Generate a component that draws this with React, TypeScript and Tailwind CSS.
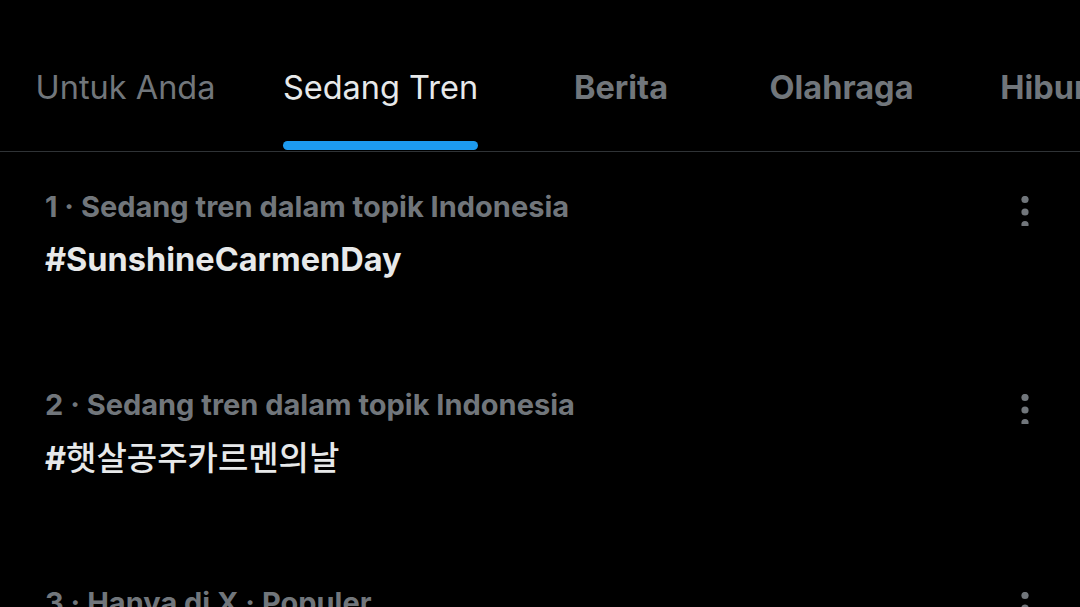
const tabs = [
  { label: 'Untuk Anda', width: 'w-[251px]', active: false, bold: false },
  { label: 'Sedang Tren', width: 'w-[259px]', active: true, bold: false },
  { label: 'Berita', width: 'w-[222px]', active: false, bold: true },
  { label: 'Olahraga', width: 'w-[219px]', active: false, bold: true },
  { label: 'Hiburan', width: 'w-[224px]', active: false, bold: true },
];

const trends = [
  { meta: '1 · Sedang tren dalam topik Indonesia', tag: '#SunshineCarmenDay', kr: false },
  { meta: '2 · Sedang tren dalam topik Indonesia', tag: '햇살공주카르멘의날', kr: true },
  { meta: '3 · Hanya di X · Populer', tag: '', kr: false },
];

function MoreIcon() {
  return (
    <svg width="30" height="30" viewBox="0 0 30 30" fill="#71767b">
      <circle cx="15" cy="3.5" r="3.6" />
      <circle cx="15" cy="16" r="3.6" />
      <circle cx="15" cy="28.5" r="3.6" />
    </svg>
  );
}

export default function App() {
  return (
    <div
      className="w-[1080px] h-[607px] overflow-hidden bg-black"
      style={{ fontFamily: 'Inter, "Noto Sans CJK KR", sans-serif' }}
    >
      {/* Tabs */}
      <div className="flex h-[152px] border-b border-[#2f3336] overflow-hidden">
        {tabs.map((t) => (
          <div key={t.label} className={`${t.width} shrink-0 flex justify-center`}>
            <div className="flex flex-col items-stretch pt-[69px]">
              <span
                className={`text-[32.5px] leading-[38px] whitespace-nowrap ${
                  t.active ? 'text-[#e7e9ea]' : 'text-[#71767b]'
                } ${t.bold ? 'font-bold' : 'font-normal'}`}
              >
                {t.label}
              </span>
              {t.active && <div className="mt-[34px] h-[9px] rounded-full bg-[#1d9bf0]" />}
            </div>
          </div>
        ))}
      </div>

      {/* Trends */}
      <div className="flex flex-col">
        {trends.map((tr) => (
          <div key={tr.meta} className="h-[198px] flex pl-[45px] pr-[40px] pt-[37px]">
            <div className="flex-1 flex flex-col">
              <span className="text-[29px] leading-[36px] font-bold text-[#71767b] whitespace-nowrap">
                {tr.meta}
              </span>
              <span className="mt-[15px] text-[32.5px] leading-[40px] font-bold text-[#e7e9ea] whitespace-nowrap">
                {tr.kr ? (
                  <>
                    #<span className="text-[33px] font-medium">{tr.tag}</span>
                  </>
                ) : (
                  tr.tag
                )}
              </span>
            </div>
            <div className="pt-[7px]">
              <MoreIcon />
            </div>
          </div>
        ))}
      </div>
    </div>
  );
}
